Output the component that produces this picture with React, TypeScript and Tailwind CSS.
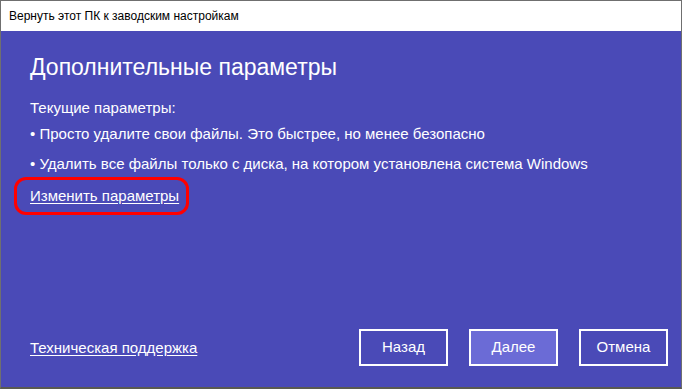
export default function App() {
  const font = { fontFamily: '"Liberation Sans", Arial, sans-serif' };
  return (
    <div
      className="w-[682px] h-[389px] flex flex-col border border-[#6f6f6f] border-b-2 border-b-[#5a5a52] bg-[#4a4ab7] overflow-hidden"
      style={font}
    >
      <div className="h-[30px] shrink-0 bg-white flex items-center pl-[8px] text-[12px] text-black">
        Вернуть этот ПК к заводским настройкам
      </div>
      <div className="flex-1 flex flex-col text-white px-[29px]">
        <h1 className="mt-[22px] text-[23px] leading-[28px] font-light">Дополнительные параметры</h1>
        <p className="mt-[17px] text-[15px] leading-[20px]">Текущие параметры:</p>
        <p className="mt-[6px] text-[15px] leading-[20px]">• Просто удалите свои файлы. Это быстрее, но менее безопасно</p>
        <p className="mt-[10px] text-[15px] leading-[20px]">• Удалить все файлы только с диска, на котором установлена система Windows</p>
        <div className="mt-[3px] -ml-[16px] w-[175px] h-[38px] border-[3px] border-[#ff0000] rounded-[12px] flex items-center pl-[13px]">
          <a className="text-[15px] leading-[20px] underline underline-offset-2">Изменить параметры</a>
        </div>
        <div className="mt-auto mb-[21px] flex items-center">
          <a className="text-[15px] leading-[20px] underline underline-offset-2">Техническая поддержка</a>
          <div className="ml-auto flex gap-[21px] -mr-[16px]">
            <button className="w-[89px] h-[37px] border-2 border-white text-[15px]">Назад</button>
            <button className="w-[89px] h-[37px] border-2 border-white bg-[#6b6bd6] text-[15px]">Далее</button>
            <button className="w-[89px] h-[37px] border-2 border-white text-[15px]">Отмена</button>
          </div>
        </div>
      </div>
    </div>
  );
}
